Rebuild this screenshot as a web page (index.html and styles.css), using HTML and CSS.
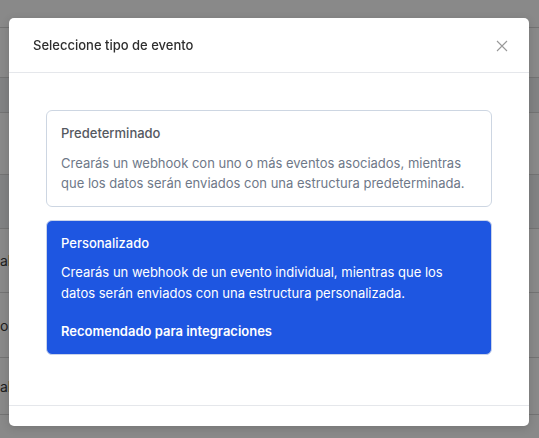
FILE: index.html
```html
<!DOCTYPE html>
<html lang="es">
<head>
<meta charset="utf-8">
<title>Seleccione tipo de evento</title>
<link rel="stylesheet" href="styles.css">
</head>
<body>
<div class="page">
  <div class="row r1"></div>
  <div class="row r2"></div>
  <div class="row r3 band"></div>
  <div class="row r4"></div>
  <div class="row r5 band"></div>
  <div class="row r6"><span class="cell">ab</span></div>
  <div class="row r7"><span class="cell">or</span></div>
  <div class="row r8"><span class="cell">ab</span></div>
  <div class="row r9"></div>
</div>
<div class="overlay"></div>
<div class="modal" role="dialog">
  <div class="modal-header">
    <h2 class="modal-title">Seleccione tipo de evento</h2>
    <button class="close" aria-label="Cerrar">
      <svg width="12" height="12" viewBox="0 0 12 12"><path d="M1 1L11 11M11 1L1 11" stroke="#999999" stroke-width="1.1" fill="none"/></svg>
    </button>
  </div>
  <div class="modal-body">
    <div class="option">
      <div class="option-title">Predeterminado</div>
      <p class="option-desc">Crearás un webhook con uno o más eventos asociados, mientras que los datos serán enviados con una estructura predeterminada.</p>
    </div>
    <div class="option selected">
      <div class="option-title">Personalizado</div>
      <p class="option-desc">Crearás un webhook de un evento individual, mientras que los datos serán enviados con una estructura personalizada.</p>
      <p class="option-note">Recomendado para integraciones</p>
    </div>
  </div>
  <div class="modal-footer"></div>
</div>
</body>
</html>
```

FILE: styles.css
```css
* { box-sizing: border-box; }
html, body { margin: 0; padding: 0; }
body {
  width: 539px;
  height: 438px;
  overflow: hidden;
  background: #ffffff;
  font-family: Inter, "Noto Sans", sans-serif;
  position: relative;
}
.page { display: flex; flex-direction: column; }
.row { border-bottom: 1px solid #d6d6d6; display: flex; align-items: center; }
.r1 { height: 28px; }
.r2 { height: 50px; }
.r3 { height: 35px; }
.r4 { height: 62px; }
.r5 { height: 54px; }
.r6 { height: 64px; }
.r7 { height: 65px; }
.r8 { height: 57px; }
.r9 { height: 30px; }
.band { background: #f1f2f4; }
.cell { font-size: 14px; color: #3a3a3a; margin-left: 0; }

.overlay {
  position: fixed;
  inset: 0;
  background: rgba(0, 0, 0, 0.463);
}
.modal {
  position: absolute;
  left: 9px;
  top: 18px;
  width: 520px;
  height: 408px;
  background: #ffffff;
  border-radius: 5px;
  box-shadow: 0 2px 8px rgba(0, 0, 0, 0.15);
  display: flex;
  flex-direction: column;
}
.modal-header {
  height: 55px;
  border-bottom: 1px solid #e5e7eb;
  display: flex;
  align-items: center;
  justify-content: space-between;
  padding: 0 21px 0 24px;
}
.modal-title {
  margin: 0;
  font-size: 13px;
  font-weight: 500;
  color: #2e2e2e;
  letter-spacing: 0;
}
.close {
  border: 0;
  background: none;
  padding: 0;
  width: 12px;
  height: 12px;
  display: flex;
  cursor: pointer;
  margin-top: 2px;
}
.modal-body {
  flex: 1;
  padding: 37px 37px 0;
  display: flex;
  flex-direction: column;
  gap: 13px;
}
.option {
  border: 1px solid #cdd6e2;
  border-radius: 6px;
  padding: 12px 14px 13px;
  background: #ffffff;
}
.option-title {
  font-size: 13px;
  font-weight: 500;
  line-height: 20px;
  color: #55595f;
}
.option-desc {
  margin: 10px 0 0;
  font-size: 13px;
  line-height: 20px;
  color: #6e7888;
}
.option.selected {
  background: #1e56e1;
  border-color: #c9d3ea;
}
.option.selected .option-title { color: #ffffff; }
.option.selected .option-desc { color: #ffffff; margin-top: 9px; line-height: 20.5px; }
.option-note {
  margin: 18px 0 0;
  font-size: 13px;
  font-weight: 600;
  line-height: 20px;
  color: #ffffff;
}
.modal-footer {
  height: 21px;
  border-top: 1px solid #e5e7eb;
}
```
